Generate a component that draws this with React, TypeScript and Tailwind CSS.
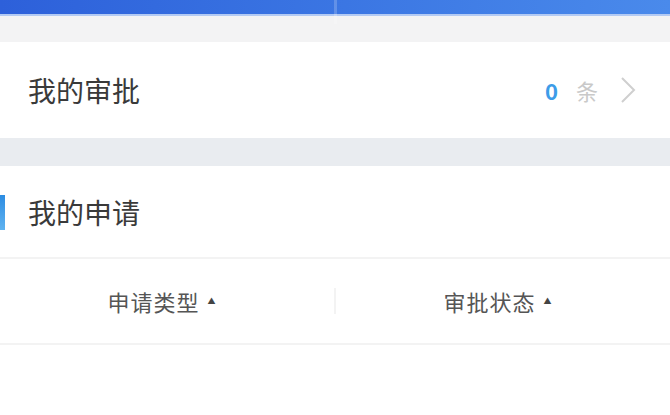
export default function App() {
  return (
    <div
      className="min-h-screen w-[670px] bg-white overflow-hidden"
      style={{ fontFamily: '"Noto Sans CJK SC", "Noto Sans", sans-serif' }}
    >
      {/* top nav remnant */}
      <div className="relative h-[14px] bg-gradient-to-r from-[#2d60da] to-[#4a8aeb]">
        <div className="absolute left-[334px] top-0 h-[24px] w-[3px] bg-white/20" />
      </div>
      <div className="h-[2px] bg-[#b3caf3]" />
      <div className="h-[26px] bg-[#f3f3f4]" />

      {/* approval row */}
      <div className="flex h-[96px] items-center justify-between bg-white pl-[28px] pr-[34px]">
        <span className="text-[28px] text-[#3a3a3a]">我的审批</span>
        <div className="flex items-center">
          <span className="text-[22px] font-bold text-[#3d9ce8]">0</span>
          <span className="ml-[18px] text-[22px] text-[#c9c9c9]">条</span>
          <svg className="ml-[22px]" width="16" height="28" viewBox="0 0 16 28" fill="none">
            <path d="M2 2 L14 14 L2 26" stroke="#cfcfcf" strokeWidth="2" />
          </svg>
        </div>
      </div>

      <div className="h-[28px] bg-[#e9ecf0]" />

      {/* my applications header */}
      <div className="relative flex h-[91px] items-center bg-white pl-[28px]">
        <div className="absolute left-0 top-[29px] h-[35px] w-[5px] bg-gradient-to-b from-[#2b8ce2] to-[#5fb3f0]" />
        <span className="text-[28px] text-[#3a3a3a]">我的申请</span>
      </div>
      <div className="h-[2px] bg-[#f3f3f3]" />

      {/* column headers */}
      <div className="flex h-[84px] items-center bg-white">
        <div className="flex flex-1 items-center justify-center pr-[10px] text-[22px] tracking-[1px] text-[#555]">
          <span>申请类型</span>
          <span className="ml-[8px] text-[8px] text-[#444]">▲</span>
        </div>
        <div className="h-[26px] w-[2px] bg-[#f3f3f3]" />
        <div className="flex flex-1 items-center justify-center pr-[10px] text-[22px] tracking-[1px] text-[#555]">
          <span>审批状态</span>
          <span className="ml-[8px] text-[8px] text-[#444]">▲</span>
        </div>
      </div>
      <div className="h-[2px] bg-[#f3f3f3]" />
    </div>
  );
}
